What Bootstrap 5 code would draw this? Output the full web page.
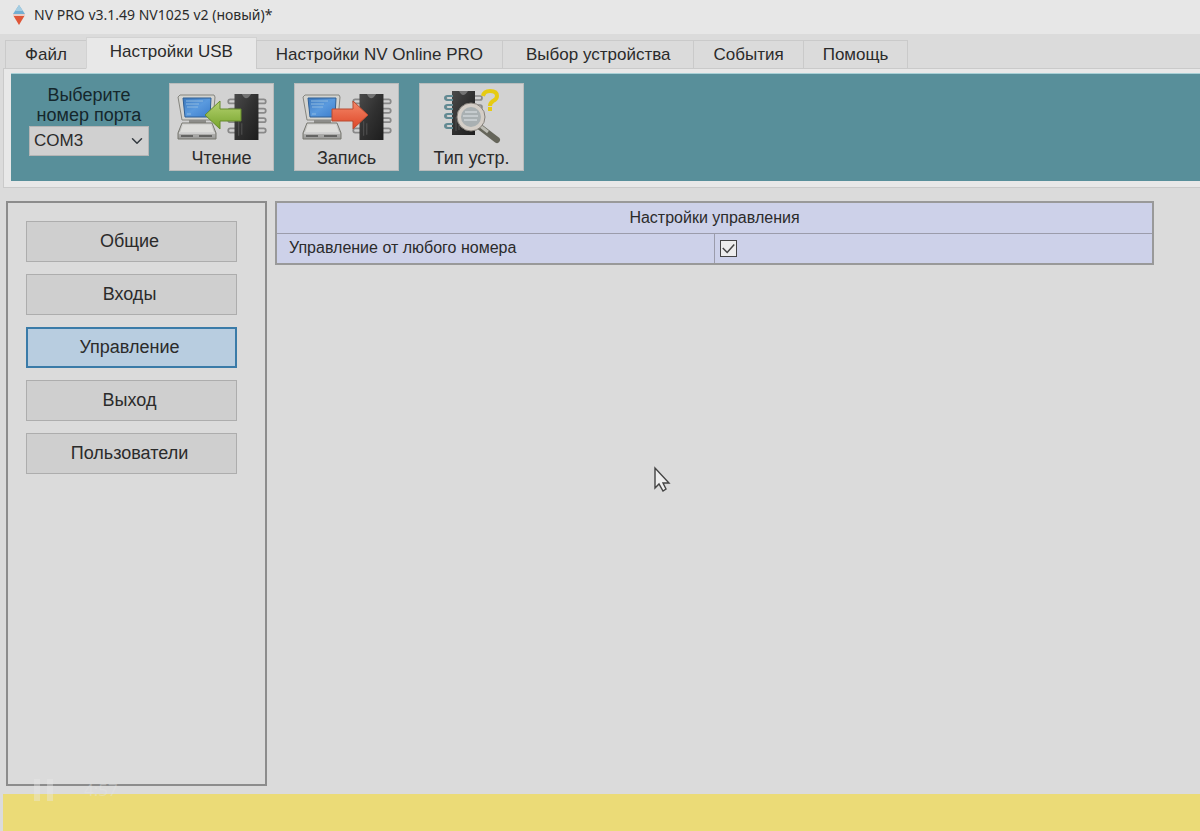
<!DOCTYPE html>
<html lang="ru">
<head>
<meta charset="utf-8">
<meta name="viewport" content="width=device-width, initial-scale=1">
<title>NV PRO v3.1.49 NV1025 v2</title>
<link href="https://cdn.jsdelivr.net/npm/bootstrap@5.3.0/dist/css/bootstrap.min.css" rel="stylesheet">
<style>
body { background: #dbdbdb; color: #2b2b2b; font-family: "Liberation Sans", Arial, sans-serif; font-size: 17px; line-height: 20px; }
.titlebar { background: #e7e7e7; height: 34px; padding: 0 12px 4px; font-family: "Noto Sans", "Open Sans", sans-serif; font-size: 14px; }
.app-tabs { padding: 3px 5px 0; border: 0; margin-bottom: -1px; position: relative; z-index: 1; }
.app-tabs .nav-link { color: #2b2b2b; border: 1px solid #cacaca; border-radius: 0; margin: 0 -1px 0 0; padding: 4px 19px; height: 29px; background: #dbdbdb; }
.app-tabs .nav-link.tab-wide { padding-left: 23px; padding-right: 23px; }
.app-tabs .nav-link.active { color: #2b2b2b; background: #e8e8e8; border-color: #d2d2d2; border-bottom-color: #e8e8e8; height: 32px; }
.tool-frame { background: #e8e8e8; border: 1px solid #cacaca; border-right: 0; margin-left: 3px; padding: 4px 0 6px 7px; }
.toolbar-band { background: #588f9a; height: 108px; padding: 9px 18px; gap: 20px; border-top: 1px solid #a8d0d6; }
.port-box { width: 120px; color: #15272c; }
.port-box label { font-size: 18px; padding: 2px 0 1px; display: block; }
.port-box .form-select { height: 30px; padding: 0 4px; border: 1px solid #b5b5b5; border-radius: 0; background-color: #d0d0d0; color: #2b2b2b; font-size: 17px; background-size: 12px 12px; background-position: right 5px center; }
.tool-btn { width: 105px; height: 88px; padding: 5px 0 2px; border: 1px solid #b9bcbc; border-radius: 0; background: #d2d2d2; color: #2b2b2b; font-size: 18px; line-height: 20px; }
.workspace { padding: 13px 46px 8px 6px; gap: 8px; }
.side-panel { width: 261px; border: 2px solid #8c8c8c; padding: 18px 28px 18px 18px; gap: 12px; }
.side-btn { height: 41px; border: 1px solid #adadad; border-radius: 0; background: #cfcfcf; color: #2b2b2b; font-size: 18px; padding: 0 4px 0 0; }
.side-btn.active { background: #b8cde0 !important; border: 2px solid #3a7ba8 !important; color: #2b2b2b !important; }
.settings { border: 2px solid #999; font-size: 16px; margin: 0; color: #2b2b2b; }
.settings th, .settings td { background: #cdd1e9; border: 1px solid #9b9cab; height: 31px; padding: 0 12px; font-weight: 400; vertical-align: middle; }
.settings td + td { padding: 0 5px; }
.settings .form-check-input { display: block; width: 17px; height: 17px; margin: 0; border: 1px solid #444; border-radius: 0; background-color: #ededed; }
.settings .form-check-input:checked { background-image: url("data:image/svg+xml,%3Csvg xmlns='http://www.w3.org/2000/svg' viewBox='0 0 17 17'%3E%3Cpath d='M2 8l5 5 8-9' fill='none' stroke='%23444' stroke-width='1.7'/%3E%3C/svg%3E"); background-size: 100%; }
.status { height: 37px; background: #ebdb77; margin-left: 3px; }
.player { left: 33px; bottom: 30px; gap: 31px; color: #e6e6e6; opacity: .4; font-family: "Open Sans", sans-serif; }
.pointer { left: 653px; top: 466px; }
</style>
</head>
<body>
<svg width="0" height="0" class="position-absolute" aria-hidden="true">
  <defs>
    <linearGradient id="scr" x1="0" y1="0" x2="1" y2="1"><stop stop-color="#3c78bd"/><stop offset=".5" stop-color="#5a9ade"/><stop offset="1" stop-color="#3b7ccb"/></linearGradient>
    <linearGradient id="shell" x1="0" y1="0" x2="0" y2="1"><stop stop-color="#d9d9d7"/><stop offset="1" stop-color="#9a9a98"/></linearGradient>
    <linearGradient id="dark" x1="0" y1="0" x2="1" y2="1"><stop stop-color="#4a4a4a"/><stop offset=".5" stop-color="#303030"/><stop offset="1" stop-color="#1d1d1d"/></linearGradient>
    <linearGradient id="grn" x1="0" y1="0" x2="0" y2="1"><stop stop-color="#b6d371"/><stop offset="1" stop-color="#76a32c"/></linearGradient>
    <linearGradient id="red" x1="0" y1="0" x2="0" y2="1"><stop stop-color="#f58a6b"/><stop offset="1" stop-color="#dd4526"/></linearGradient>
    <symbol id="pc" viewBox="0 0 40 48">
      <path d="M3 2h34l1 2-2 23H5L1 4z" fill="#d3d3cf" stroke="#85857f"/>
      <path d="M6 5h28l-1 19H8z" fill="url(#scr)" stroke="#2f5e94"/>
      <path d="M9 8h17M9 11h13M10 14h11M10 21h4" stroke="#8fbae0"/>
      <path d="M12 27h17v4H12z" fill="#8d8d89"/>
      <path d="M5 30h30l4 10v6H1v-6z" fill="url(#shell)" stroke="#77776f"/>
      <path d="M6 32h28l3 7H3z" fill="#dededb"/>
      <path d="M2 40h36" stroke="#eee"/><path d="M4 43h12M22 43h13" stroke="#4f4f4d" stroke-width="1.5"/>
    </symbol>
    <symbol id="chip" viewBox="0 0 40 48">
      <g fill="none" stroke="#898989" stroke-width="1.7"><path d="M9 7H4q-2 0-2 2t2 2h5M9 16H4q-2 0-2 2t2 2h5M9 25H4q-2 0-2 2t2 2h5M9 35H4q-2 0-2 2t2 2h5M30 7h6q2 0 2 2t-2 2h-6M30 16h6q2 0 2 2t-2 2h-6M30 25h6q2 0 2 2t-2 2h-6M30 35h6q2 0 2 2t-2 2h-6"/></g>
      <path d="M8 2h23v44H8z" fill="url(#dark)"/><path d="M15 2q4 8 9 0z" fill="#737373"/>
      <path d="M12 28v14M15 30v11" stroke="#515151"/>
    </symbol>
  </defs>
</svg>
<div class="min-vh-100 d-flex flex-column position-relative overflow-hidden">
  <header class="titlebar d-flex align-items-center">
    <svg width="14" height="20" viewBox="0 0 14 20" class="me-2" aria-hidden="true"><path d="M7 0l6 9H1z" fill="#72aed2"/><path d="M3 6l4-6 4 6z" fill="#a5cde2"/><path d="M1 10h12L7 20z" fill="#df5638"/><path d="M1 9h12v2H1z" fill="#e9ccc5"/></svg>
    <span>NV PRO v3.1.49 NV1025 v2 (новый)*</span>
  </header>
  <nav class="app-tabs nav nav-tabs align-items-end flex-nowrap text-nowrap">
    <a class="nav-link" href="#file">Файл</a>
    <a class="nav-link tab-wide active" aria-current="page" href="#usb">Настройки USB</a>
    <a class="nav-link" href="#online">Настройки NV Online PRO</a>
    <a class="nav-link tab-wide" href="#device">Выбор устройства</a>
    <a class="nav-link" href="#events">События</a>
    <a class="nav-link" href="#help">Помощь</a>
  </nav>
  <div class="tool-frame">
    <div class="toolbar-band d-flex">
      <div class="port-box text-center">
        <label for="port">Выберите номер порта</label>
        <select id="port" class="form-select"><option>COM3</option></select>
      </div>
      <button type="button" class="tool-btn btn d-flex flex-column align-items-center justify-content-between">
        <svg width="92" height="56" viewBox="0 0 92 56" aria-hidden="true"><use href="#pc" x="1" y="4" width="40" height="48"/><use href="#chip" x="50" y="3" width="42" height="50"/><path d="M29 26l15-14v8h21v12H44v8z" fill="url(#grn)" stroke="#668c2c"/></svg>
        <span>Чтение</span>
      </button>
      <button type="button" class="tool-btn btn d-flex flex-column align-items-center justify-content-between">
        <svg width="92" height="56" viewBox="0 0 92 56" aria-hidden="true"><use href="#pc" x="1" y="4" width="40" height="48"/><use href="#chip" x="50" y="3" width="42" height="50"/><path d="M67 26L52 12v8H31v12h21v8z" fill="url(#red)" stroke="#b94a30"/></svg>
        <span>Запись</span>
      </button>
      <button type="button" class="tool-btn btn d-flex flex-column align-items-center justify-content-between">
        <svg width="92" height="56" viewBox="3 0 92 56" aria-hidden="true"><use href="#chip" x="21" y="0" width="40" height="48"/><path d="M30 7h-5q-3 0-3 2t3 2h5M30 16h-5q-3 0-3 2t3 2h5M30 25h-5q-3 0-3 2t3 2h5M30 35h-5q-3 0-3 2t3 2h5" fill="none" stroke="#608a93" stroke-width="2"/><path d="M57 38l17 13" stroke="#65655a" stroke-width="6" stroke-linecap="round"/><path d="M56 36l9 7" stroke="#bcbcb4" stroke-width="3"/><circle cx="48" cy="28" r="12" fill="#a9b0b2" stroke="#d4cec7" stroke-width="4"/><circle cx="48" cy="28" r="14" fill="none" stroke="#85807a"/><path d="M42 23h12M40 27h15M41 31h13" stroke="#c5cbce" stroke-width="2"/><path d="M60 7q1-5 7-5 7 0 7 5 0 3-4 5-3 2-3 5" fill="none" stroke="#e6cb12" stroke-width="4"/><path d="M65 18h4v4h-4z" fill="#e6cb12"/></svg>
        <span>Тип устр.</span>
      </button>
    </div>
  </div>
  <main class="workspace d-flex flex-grow-1">
    <aside class="side-panel d-flex flex-column flex-shrink-0">
      <button type="button" class="side-btn btn">Общие</button>
      <button type="button" class="side-btn btn">Входы</button>
      <button type="button" class="side-btn btn active">Управление</button>
      <button type="button" class="side-btn btn">Выход</button>
      <button type="button" class="side-btn btn">Пользователи</button>
    </aside>
    <section class="flex-grow-1">
      <table class="settings w-100">
        <thead><tr><th colspan="2" class="text-center">Настройки управления</th></tr></thead>
        <tbody><tr><td class="w-50"><label for="any">Управление от любого номера</label></td><td><input id="any" class="form-check-input" type="checkbox" checked></td></tr></tbody>
      </table>
    </section>
  </main>
  <footer class="status"></footer>
  <div class="player position-absolute d-flex align-items-center" aria-hidden="true">
    <svg width="20" height="22" viewBox="0 0 20 22"><path d="M1 0h6v22H1zM14 0h6v22h-6z" fill="#e9e9e9"/></svg><span>4:57</span>
  </div>
  <svg class="pointer position-absolute" width="18" height="26" viewBox="0 0 18 26" aria-hidden="true"><path d="M2 2v20l4-4 4 7 3-2-3-6h6z" fill="#eee" stroke="#444" stroke-width="1.4"/></svg>
</div>
<script src="https://cdn.jsdelivr.net/npm/bootstrap@5.3.0/dist/js/bootstrap.bundle.min.js"></script>
</body>
</html>
